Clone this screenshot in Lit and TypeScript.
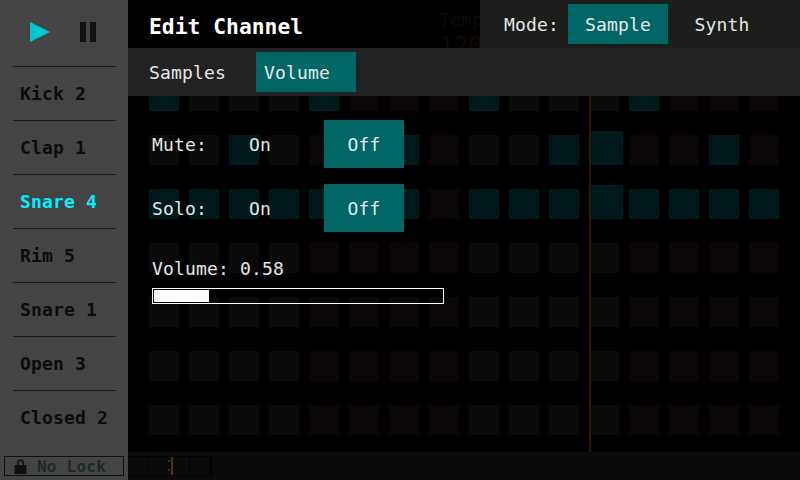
import { LitElement, html, css } from "lit";
import { customElement } from "lit/decorators.js";

const TRACKS = ["Kick 2", "Clap 1", "Snare 4", "Rim 5", "Snare 1", "Open 3", "Closed 2"];
const ACTIVE: number[][] = [
  [0, 4, 8, 12],
  [2, 6, 10, 11, 14],
  [0, 1, 2, 3, 4, 5, 6, 8, 9, 10, 11, 12, 13, 14, 15],
  [], [], [], [],
];
const BEAT = 11;

@customElement("app-root")
export class AppRoot extends LitElement {
  static styles = css`
    :host {
      display: block;
      width: 800px;
      height: 480px;
      font-family: "DejaVu Sans Mono", monospace;
      font-size: 18px;
      letter-spacing: 0.16px;
      background: #000;
      overflow: hidden;
    }
    .app { position: relative; display: flex; width: 800px; height: 480px; background: #000; }
    .sidebar {
      width: 128px; flex: none; background: #444; display: flex; flex-direction: column;
      color: #0c0c0c;
    }
    .transport { height: 66px; display: flex; align-items: flex-start; padding: 22px 0 0 30px; box-sizing: border-box; gap: 30px; }
    .transport svg { display: block; }
    .track {
      height: 54px; box-sizing: border-box; margin: 0 12px 0 13px; border-top: 1px solid #1a1a1a;
      display: flex; align-items: center; padding-left: 7px; font-weight: bold;
    }
    .track.sel { color: #00f0ff; }
    .lock {
      margin: 12px 4px 0; height: 20px; width: 120px; box-sizing: border-box; border: 1px solid #111;
      display: flex; align-items: center; gap: 10px; padding-left: 9px; font-size: 16px; font-weight: bold;
      color: #1c2a2a; letter-spacing: 0.23px;
    }
    .main { flex: 1; display: flex; flex-direction: column; min-width: 0; }
    .top { height: 81px; flex: none; padding: 9px 0 0 311px; box-sizing: border-box; color: #0b0b0b; line-height: 22px; overflow: hidden; }
    .top .bpm { font-size: 24px; line-height: 30px; color: #100a00; }
    .grid { position: relative; height: 371px; flex: none; padding-left: 21px; display: flex; flex-direction: column; gap: 24px; }
    .row { display: flex; gap: 10px; height: 30px; align-items: flex-end; }
    .cell { width: 30px; height: 30px; background: #0a0a0a; flex: none; }
    .cell.alt { background: #0a060a; }
    .cell.on { background: #001a1c; }
    .cell.bump { width: 34px; height: 34px; margin-right: -4px; }
    .playhead { position: absolute; left: 461px; top: 0; bottom: 0; width: 2px; background: #2b1a00; }
    .bottom { height: 28px; flex: none; background: #0b0b0b; padding-top: 4px; box-sizing: border-box; }
    .mini { position: relative; width: 84px; height: 20px; box-sizing: border-box; border: 1px solid #030303; border-left: none; display: flex; }
    .mini i { flex: 1; border-right: 1px solid #030303; }
    .mini b { position: absolute; left: 43px; top: 0; bottom: 0; width: 2px; background: #5a3000; }
    .mini u { position: absolute; left: 40px; width: 2px; height: 2px; background: #044; }

    .overlay { position: absolute; left: 128px; top: 0; right: 0; bottom: 0; color: #e6e6e6; display: flex; flex-direction: column; }
    .head { height: 48px; flex: none; display: flex; justify-content: space-between; }
    .title { font-size: 21.33px; font-weight: bold; color: #fff; padding: 14px 0 0 21px; line-height: 26px; letter-spacing: 0; }
    .mode { width: 320px; background: #1c1e1c; display: flex; align-items: center; padding-left: 24px; box-sizing: border-box; }
    .mode .lbl { width: 64px; }
    .btn { display: flex; align-items: center; justify-content: center; width: 100px; height: 40px; flex: none; }
    .btn.on { background: #006666; }
    .mode .btn + .btn { margin-left: 4px; }
    .tabs { height: 48px; flex: none; background: #222; display: flex; align-items: center; padding-left: 13px; gap: 15px; }
    .tab { width: 100px; height: 40px; box-sizing: border-box; padding-left: 8px; display: flex; align-items: center; }
    .tab.on { background: #006666; }
    .body { padding: 24px 0 0 24px; display: flex; flex-direction: column; gap: 16px; }
    .opt { display: flex; align-items: center; height: 48px; }
    .opt .lbl { width: 68px; }
    .opt .btn { width: 80px; height: 48px; }
    .opt .btn + .btn { margin-left: 24px; }
    .vol { margin-top: 10px; line-height: 22px; }
    .bar { margin-top: 8px; width: 292px; height: 16px; box-sizing: border-box; border: 1px solid #fff; padding: 1px; }
    .bar div { height: 100%; background: #fff; }
  `;

  render() {
    return html`
      <div class="app">
        <div class="sidebar">
          <div class="transport">
            <svg width="20" height="20" viewBox="0 0 20 20"><polygon points="0,0 20,10 0,20" fill="#00c8d2"></polygon></svg>
            <svg width="16" height="20" viewBox="0 0 16 20"><rect x="0" y="0" width="6" height="20" fill="#111"></rect><rect x="10" y="0" width="6" height="20" fill="#111"></rect></svg>
          </div>
          ${TRACKS.map((t) => html`<div class="track ${t === "Snare 4" ? "sel" : ""}">${t}</div>`)}
          <div class="lock">
            <svg width="13" height="15" viewBox="0 0 13 15"><path d="M0.5 6h12v9h-12z M3 6V4a3.5 3.5 0 0 1 7 0v2H8.5V4a2 2 0 0 0-4 0v2z" fill="#111"></path></svg>
            <span>No Lock</span>
          </div>
        </div>
        <div class="main">
          <div class="top"><div>Tempo</div><div class="bpm">120</div></div>
          <div class="grid">
            ${ACTIVE.map(
              (row) => html`<div class="row">
                ${Array.from({ length: 16 }, (_, i) => {
                  const on = row.includes(i);
                  const alt = Math.floor(i / 4) % 2 === 1;
                  return html`<div class="cell ${alt ? "alt" : ""} ${on ? "on" : ""} ${on && i === BEAT ? "bump" : ""}"></div>`;
                })}
              </div>`
            )}
            <div class="playhead"></div>
          </div>
          <div class="bottom">
            <div class="mini"><i></i><i></i><i></i><i></i><b></b><u style="top: 3px"></u><u style="top: 12px"></u></div>
          </div>
        </div>
        <div class="overlay">
          <div class="head">
            <div class="title">Edit Channel</div>
            <div class="mode">
              <div class="lbl">Mode:</div>
              <div class="btn on">Sample</div>
              <div class="btn">Synth</div>
            </div>
          </div>
          <div class="tabs">
            <div class="tab">Samples</div>
            <div class="tab on">Volume</div>
          </div>
          <div class="body">
            <div class="opt"><div class="lbl">Mute:</div><div class="btn">On</div><div class="btn on">Off</div></div>
            <div class="opt"><div class="lbl">Solo:</div><div class="btn">On</div><div class="btn on">Off</div></div>
            <div class="vol">
              <div>Volume: 0.58</div>
              <div class="bar"><div style="width: ${0.19 * 100}%"></div></div>
            </div>
          </div>
        </div>
      </div>
    `;
  }
}
